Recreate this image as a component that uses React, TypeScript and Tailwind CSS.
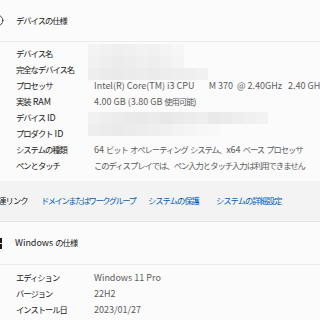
import { Info } from "lucide-react";

const specs1 = [
  { label: "デバイス名", value: "" },
  { label: "完全なデバイス名", value: "" },
  { label: "プロセッサ", value: "Intel(R) Core(TM) i3 CPU       M 370  @ 2.40GHz   2.40 GHz" },
  { label: "実装 RAM", value: "4.00 GB (3.80 GB 使用可能)" },
  { label: "デバイス ID", value: "" },
  { label: "プロダクト ID", value: "" },
  { label: "システムの種類", value: "64 ビット オペレーティング システム、x64 ベース プロセッサ" },
  { label: "ペンとタッチ", value: "このディスプレイでは、ペン入力とタッチ入力は利用できません" },
];

const specs2 = [
  { label: "エディション", value: "Windows 11 Pro" },
  { label: "バージョン", value: "22H2" },
  { label: "インストール日", value: "2023/01/27" },
];

// japanese runs get tighter spacing, like the narrow kana of the UI font
function T({ text, tight }: { text: string; tight?: boolean }) {
  const parts = text.split(/([\u3000-\u30ff\u4e00-\u9fff\uff00-\uffef]+)/);
  return (
    <>
      {parts.map((p, i) =>
        i % 2 === 1 ? (
          <span
            key={i}
            className={tight ? "text-[8.3px] tracking-[-1.5px]" : "text-[8.3px] tracking-[-1px]"}
          >
            {p}
          </span>
        ) : (
          <span key={i}>{p}</span>
        )
      )}
    </>
  );
}

function Row({ label, value }: { label: string; value: string }) {
  return (
    <div className="flex h-[16px] items-center whitespace-pre">
      <div className="w-[94px] shrink-0 pl-[16px] text-[#191919]">
        <T text={label} />
      </div>
      <div className="text-[#5c5c5c]">
        <T text={value} />
      </div>
    </div>
  );
}

function Mosaic({ tiles }: { tiles: string[][] }) {
  return (
    <div className="flex flex-col">
      {tiles.map((r, i) => (
        <div key={i} className="flex">
          {r.map((c, j) => (
            <div key={j} className="h-[12px] w-[12px]" style={{ background: c }} />
          ))}
        </div>
      ))}
    </div>
  );
}

const m1 = [
  ["#f3f3f3", "#f1f1f1", "#efefef", "#f0f0f0", "#f2f2f2", "#f1f1f1", "#f4f4f4", "#f6f6f6"],
  ["#f1f1f1", "#eeeeee", "#ececec", "#ededed", "#efefef", "#eeeeee", "#f1f1f1", "#f4f4f4"],
  ["#eeeeee", "#ebebeb", "#eaeaea", "#ebebeb", "#ececec", "#ebebeb", "#ededed", "#eeeeee", "#efefef", "#f1f1f1"],
];

const m2 = [
  ["#f1f1f1", "#eeeeee", "#ececec", "#eaeaea", "#e9e9e9", "#ebebeb", "#e8e8e8", "#eaeaea", "#ececec", "#eeeeee", "#e9e9e9", "#ebebeb", "#eeeeee", "#f0f0f0", "#f2f2f2"],
  ["#eeeeee", "#ececec", "#eaeaea", "#ebebeb", "#ededed", "#eeeeee", "#f0f0f0", "#f3f3f3", "#f5f5f5", "#f7f7f7", "#f8f8f8"],
];

export default function App() {
  return (
    <div className="h-[320px] w-[320px] overflow-hidden bg-[#fbfbfb] text-[9px] [font-family:'Noto_Sans_CJK_JP',sans-serif]">
      <div className="flex h-[42px] items-center gap-[12px] border-b border-[#ebebeb]">
        <Info size={13} strokeWidth={1.4} className="-ml-[9px] text-[#1b1b1b]" />
        <span className="text-[#191919]">
          <T text="デバイスの仕様" />
        </span>
      </div>
      <div className="relative pt-[4px] pb-[7px]">
        {specs1.map((s) => (
          <Row key={s.label} label={s.label} value={s.value} />
        ))}
        <div className="absolute left-[88px] top-[2px]">
          <Mosaic tiles={m1} />
        </div>
        <div className="absolute left-[88px] top-[70px]">
          <Mosaic tiles={m2} />
        </div>
      </div>
      <div className="flex h-[41px] items-center whitespace-nowrap border-b border-[#e5e5e5] bg-[#f3f3f3]">
        <span className="-ml-[9px] w-[50px] shrink-0 text-[#191919]">
          <T text="関連リンク" />
        </span>
        <span className="w-[107px] shrink-0 text-[#005fb8]">
          <T text="ドメインまたはワークグループ" tight />
        </span>
        <span className="w-[68px] shrink-0 text-[#005fb8]">
          <T text="システムの保護" />
        </span>
        <span className="text-[#005fb8]">
          <T text="システムの詳細設定" />
        </span>
      </div>
      <div className="flex h-[43px] items-center gap-[13px] border-b border-[#ebebeb]">
        <svg viewBox="0 0 12 12" className="-ml-[9px] h-[11px] w-[11px] shrink-0">
          <rect x="0" y="0" width="5.5" height="5.5" fill="#1b1b1b" />
          <rect x="6.5" y="0" width="5.5" height="5.5" fill="#1b1b1b" />
          <rect x="0" y="6.5" width="5.5" height="5.5" fill="#1b1b1b" />
          <rect x="6.5" y="6.5" width="5.5" height="5.5" fill="#1b1b1b" />
        </svg>
        <span className="text-[#191919]">
          <T text="Windows の仕様" />
        </span>
      </div>
      <div className="pt-[5px]">
        {specs2.map((s) => (
          <Row key={s.label} label={s.label} value={s.value} />
        ))}
      </div>
    </div>
  );
}
